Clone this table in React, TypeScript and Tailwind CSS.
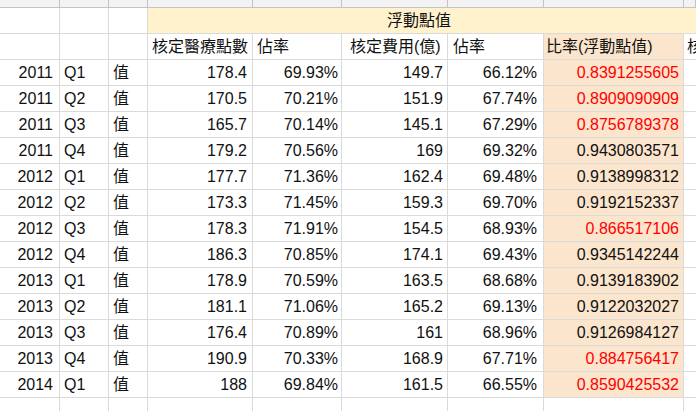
const rows: [string, string, string, string, string, string, string, boolean][] = [
  ["2011", "Q1", "178.4", "69.93%", "149.7", "66.12%", "0.8391255605", true],
  ["2011", "Q2", "170.5", "70.21%", "151.9", "67.74%", "0.8909090909", true],
  ["2011", "Q3", "165.7", "70.14%", "145.1", "67.29%", "0.8756789378", true],
  ["2011", "Q4", "179.2", "70.56%", "169", "69.32%", "0.9430803571", false],
  ["2012", "Q1", "177.7", "71.36%", "162.4", "69.48%", "0.9138998312", false],
  ["2012", "Q2", "173.3", "71.45%", "159.3", "69.70%", "0.9192152337", false],
  ["2012", "Q3", "178.3", "71.91%", "154.5", "68.93%", "0.866517106", true],
  ["2012", "Q4", "186.3", "70.85%", "174.1", "69.43%", "0.9345142244", false],
  ["2013", "Q1", "178.9", "70.59%", "163.5", "68.68%", "0.9139183902", false],
  ["2013", "Q2", "181.1", "71.06%", "165.2", "69.13%", "0.9122032027", false],
  ["2013", "Q3", "176.4", "70.89%", "161", "68.96%", "0.9126984127", false],
  ["2013", "Q4", "190.9", "70.33%", "168.9", "67.71%", "0.884756417", true],
  ["2014", "Q1", "188", "69.84%", "161.5", "66.55%", "0.8590425532", true],
]

const grid = "grid w-[696px] grid-cols-[60px_49px_39px_105px_89px_106px_96px_140px_12px]"
const cell = "min-w-0 h-[26px] border-r border-b border-[#dadada] flex items-end pb-[3px] whitespace-nowrap overflow-hidden"

export default function App() {
  return (
    <div
      className="w-[696px] h-[411px] overflow-hidden bg-white text-[16px] leading-[18px] text-[#111]"
      style={{ fontFamily: '"Liberation Sans", Arial, "Noto Sans CJK TC", sans-serif' }}
    >
      {/* column letter strip */}
      <div className={`${grid} h-[8px] bg-[#f3f3f3]`}>
        {Array.from({ length: 9 }).map((_, i) => (
          <div key={i} className="h-[8px] border-r border-b border-[#c4c4c4]" />
        ))}
      </div>

      {/* merged group header */}
      <div className={grid}>
        <div className={cell} />
        <div className={cell} />
        <div className={cell} />
        <div className={`${cell} col-span-6 border-r-0 bg-[#fff2cc] pl-[239px]`}>浮動點值</div>
      </div>

      {/* column titles */}
      <div className={grid}>
        <div className={cell} />
        <div className={cell} />
        <div className={cell} />
        <div className={`${cell} pl-[4px]`}>核定醫療點數</div>
        <div className={`${cell} pl-[4px]`}>佔率</div>
        <div className={`${cell} pl-[8px]`}>核定費用(億)</div>
        <div className={`${cell} pl-[5px]`}>佔率</div>
        <div className={`${cell} pl-[2px] bg-[#fce5cd]`}>比率(浮動點值)</div>
        <div className={`${cell} pl-[3px] border-r-0`}>核</div>
      </div>

      {rows.map(([year, q, pts, r1, fee, r2, ratio, red]) => (
        <div key={year + q} className={grid}>
          <div className={`${cell} justify-end pr-[6px]`}>{year}</div>
          <div className={`${cell} pl-[4px]`}>{q}</div>
          <div className={`${cell} pl-[4px]`}>值</div>
          <div className={`${cell} justify-end pr-[5px]`}>{pts}</div>
          <div className={`${cell} justify-end pr-[3px]`}>{r1}</div>
          <div className={`${cell} justify-end pr-[4px]`}>{fee}</div>
          <div className={`${cell} justify-end pr-[6px]`}>{r2}</div>
          <div className={`${cell} justify-end pr-[4px] bg-[#fce5cd] ${red ? "text-[#ff0000]" : ""}`}>{ratio}</div>
          <div className={`${cell} border-r-0`} />
        </div>
      ))}

      <div className={grid}>
        {Array.from({ length: 9 }).map((_, i) => (
          <div key={i} className={`${cell} ${i === 8 ? "border-r-0" : ""}`} />
        ))}
      </div>
    </div>
  )
}
